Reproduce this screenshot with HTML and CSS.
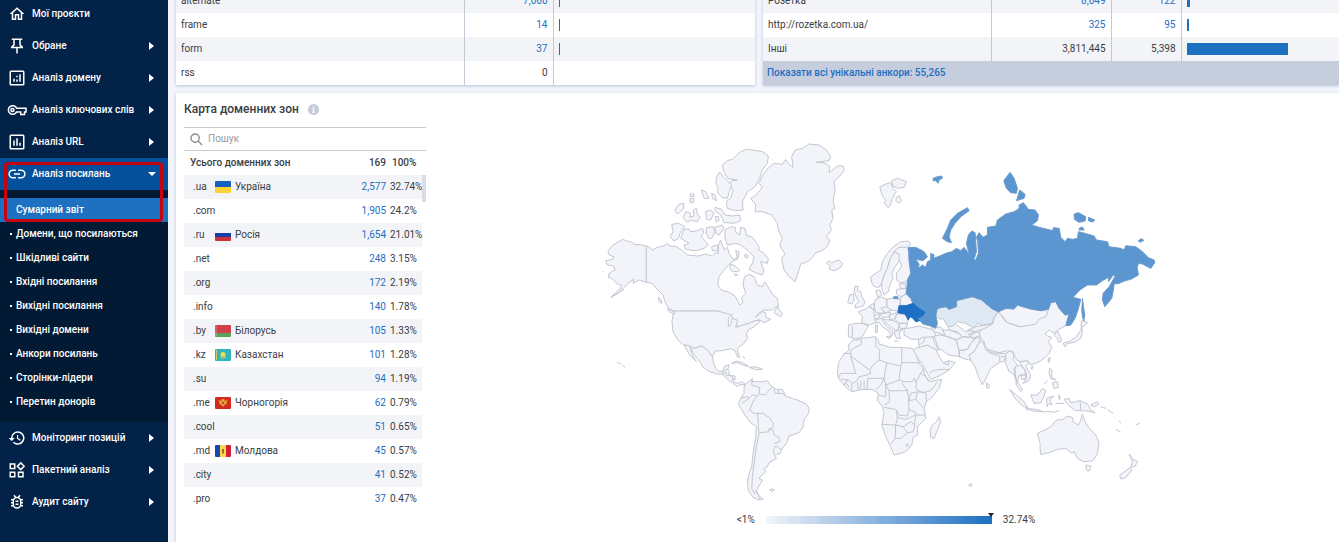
FILE: index.html
```html
<!DOCTYPE html>
<html lang="uk">
<head>
  <meta charset="UTF-8">
  <meta name="viewport" content="width=device-width, initial-scale=1.0">
  <title>Аналіз посилань - Сумарний звіт</title>
  <link rel="stylesheet" href="styles.css">
</head>
<body>
  <nav class="sidebar">
    <a class="menu-item" href="#">
      <svg class="menu-icon" viewBox="0 0 24 24"><path d="M12 5.690l5 4.500V18h-2v-6H9v6H7v-7.810l5-4.500M12 3L2 12h3v8h6v-6h2v6h6v-8h3z"/></svg>
      <span>Мої проєкти</span>
    </a>
    <a class="menu-item has-arrow" href="#">
      <svg class="menu-icon" viewBox="0 0 24 24"><path d="M5 2h14v2h-2v6l3 3v2h-7v7h-2v-7H4v-2l3-3V4H5zM9 4v7l-2 2h10l-2-2V4z"/></svg>
      <span>Обране</span>
    </a>
    <a class="menu-item has-arrow" href="#">
      <svg class="menu-icon line" viewBox="0 0 24 24"><rect x="3" y="3" width="18" height="18" rx="1"/><path d="M8 13v4M12 9v2M12 14v3M16 7v10"/></svg>
      <span>Аналіз домену</span>
    </a>
    <a class="menu-item has-arrow" href="#">
      <svg class="menu-icon line" viewBox="0 0 24 24"><path d="M11.500 9.500H24v5h-2V18h-5v-3.500h-5.500A5.800 5.800 0 1 1 11.500 9.500z"/><circle cx="6" cy="12" r="2"/></svg>
      <span>Аналіз ключових слів</span>
    </a>
    <a class="menu-item has-arrow" href="#">
      <svg class="menu-icon line" viewBox="0 0 24 24"><rect x="3" y="3" width="18" height="18" rx="1"/><path d="M8 10v7M12 7v10M16 13v4"/></svg>
      <span>Аналіз URL</span>
    </a>
    <div class="menu-group">
      <a class="menu-item has-arrow open" href="#">
        <svg class="menu-icon line" viewBox="0 0 24 24"><path d="M10.500 7H6.500a5 5 0 0 0 0 10h4M13.500 7h4a5 5 0 0 1 0 10h-4M8 12h8"/></svg>
        <span>Аналіз посилань</span>
      </a>
      <div class="submenu">
        <a class="active" href="#">Сумарний звіт</a>
        <a href="#">Домени, що посилаються</a>
        <a href="#">Шкідливі сайти</a>
        <a href="#">Вхідні посилання</a>
        <a href="#">Вихідні посилання</a>
        <a href="#">Вихідні домени</a>
        <a href="#">Анкори посилань</a>
        <a href="#">Сторінки-лідери</a>
        <a href="#">Перетин донорів</a>
      </div>
      <div class="highlight"></div>
    </div>
    <a class="menu-item has-arrow" href="#">
      <svg class="menu-icon" viewBox="0 0 24 24"><path d="M13 3a9 9 0 0 0-9 9H1l4 4 4-4H6a7 7 0 1 1 2.060 4.940l-1.420 1.420A9 9 0 1 0 13 3zm-1 5v5l4.250 2.520.77-1.280-3.520-2.090V8z"/></svg>
      <span>Моніторинг позицій</span>
    </a>
    <a class="menu-item has-arrow" href="#">
      <svg class="menu-icon line" viewBox="0 0 24 24"><path d="M3 4h6v6H3zM3 15h6v6H3zM14 15h6v6h-6zM17 2.500l4.500 4.500-4.500 4.500L12.500 7z"/></svg>
      <span>Пакетний аналіз</span>
    </a>
    <a class="menu-item has-arrow" href="#">
      <svg class="menu-icon line" viewBox="0 0 24 24"><rect x="7" y="6" width="10" height="14" rx="5"/><path d="M8 3l2.500 3M16 3l-2.500 3M4 9h3M17 9h3M4 13h3M17 13h3M4 17h3M17 17h3M10 11h4M10 15h4"/></svg>
      <span>Аудит сайту</span>
    </a>
  </nav>

  <main class="content">
    <div class="reports">
      <section class="card">
        <table class="report types">
          <tr><td>alternate</td><td><a href="#">7,060</a></td><td><div class="bar" style="width: 1px"></div></td></tr>
          <tr><td>frame</td><td><a href="#">14</a></td><td><div class="bar" style="width: 1px"></div></td></tr>
          <tr><td>form</td><td><a href="#">37</a></td><td><div class="bar" style="width: 1px"></div></td></tr>
          <tr><td>rss</td><td>0</td><td></td></tr>
        </table>
      </section>
      <section class="card">
        <table class="report anchors">
          <tr><td>Розетка</td><td><a href="#">8,649</a></td><td><a href="#">122</a></td><td><div class="bar" style="width: 3px"></div></td></tr>
          <tr><td>http://rozetka.com.ua/</td><td><a href="#">325</a></td><td><a href="#">95</a></td><td><div class="bar" style="width: 2px"></div></td></tr>
          <tr><td>Інші</td><td>3,811,445</td><td>5,398</td><td><div class="bar" style="width: 101px"></div></td></tr>
        </table>
        <a class="show-all" href="#">Показати всі унікальні анкори: 55,265</a>
      </section>
    </div>

    <section class="card zones">
      <div class="zones-list">
        <h2>Карта доменних зон
          <svg class="info" viewBox="0 0 12 12"><circle cx="6" cy="6" r="6"/><path d="M5.300 2.500h1.600V4H5.300zM4.700 5h2.200v3.500h.6v1h-3v-1h.8V6h-.6z"/></svg>
        </h2>
        <label class="search">
          <svg viewBox="0 0 14 14"><circle cx="5.500" cy="5.500" r="4.500"/><path d="M9 9l4 4"/></svg>
          <input type="text" placeholder="Пошук" aria-label="Пошук">
        </label>
        <div class="zones-scroll">
          <table class="zones-table">
            <colgroup>
              <col class="col-code">
              <col>
              <col class="col-count">
              <col class="col-share">
            </colgroup>
            <thead>
              <tr><th colspan="2">Усього доменних зон</th><th>169</th><th>100%</th></tr>
            </thead>
            <tbody>
              <tr><td>.ua</td><td><svg class="flag" viewBox="0 0 16 12"><path fill="#1561c2" d="M0 0h16v6H0z"/><path fill="#fcd535" d="M0 6h16v6H0z"/></svg>Україна</td><td><a href="#">2,577</a></td><td>32.74%</td></tr>
              <tr><td>.com</td><td></td><td><a href="#">1,905</a></td><td>24.2%</td></tr>
              <tr><td>.ru</td><td><svg class="flag" viewBox="0 0 16 12"><path fill="#f4f5f8" d="M0 0h16v4H0z"/><path fill="#173fa8" d="M0 4h16v4H0z"/><path fill="#d03038" d="M0 8h16v4H0z"/></svg>Росія</td><td><a href="#">1,654</a></td><td>21.01%</td></tr>
              <tr><td>.net</td><td></td><td><a href="#">248</a></td><td>3.15%</td></tr>
              <tr><td>.org</td><td></td><td><a href="#">172</a></td><td>2.19%</td></tr>
              <tr><td>.info</td><td></td><td><a href="#">140</a></td><td>1.78%</td></tr>
              <tr><td>.by</td><td><svg class="flag" viewBox="0 0 16 12"><path fill="#d0414b" d="M0 0h16v8H0z"/><path fill="#5ba05c" d="M0 8h16v4H0z"/><path fill="none" stroke="#eab9bb" stroke-dasharray="1 1" d="M1 0v12"/></svg>Білорусь</td><td><a href="#">105</a></td><td>1.33%</td></tr>
              <tr><td>.kz</td><td><svg class="flag" viewBox="0 0 16 12"><path fill="#2fb4c4" d="M0 0h16v12H0z"/><circle cx="8" cy="5.500" r="2.500" fill="#f2dc4e"/><path fill="none" stroke="#c9d35d" d="M5 8q3 3 6 0M1.500 1v10"/></svg>Казахстан</td><td><a href="#">101</a></td><td>1.28%</td></tr>
              <tr><td>.su</td><td></td><td><a href="#">94</a></td><td>1.19%</td></tr>
              <tr><td>.me</td><td><svg class="flag" viewBox="0 0 16 12"><path fill="#d22a20" d="M0 0h16v12H0z"/><path fill="#e2a13a" d="M3.500 3l2.500 1 1-2h2l1 2 2.500-1-1 4-2 1-1.500 2L6.500 8l-2-1z"/><circle cx="8" cy="6" r="1" fill="#b02a20"/></svg>Чорногорія</td><td><a href="#">62</a></td><td>0.79%</td></tr>
              <tr><td>.cool</td><td></td><td><a href="#">51</a></td><td>0.65%</td></tr>
              <tr><td>.md</td><td><svg class="flag" viewBox="0 0 16 12"><path fill="#1648b0" d="M0 0h6v12H0z"/><path fill="#fcd94a" d="M5 0h6v12H5z"/><path fill="#d32036" d="M11 0h5v12h-5z"/><path fill="#a5682e" d="M7 4h2v4l-1 1-1-1z"/></svg>Молдова</td><td><a href="#">45</a></td><td>0.57%</td></tr>
              <tr><td>.city</td><td></td><td><a href="#">41</a></td><td>0.52%</td></tr>
              <tr><td>.pro</td><td></td><td><a href="#">37</a></td><td>0.47%</td></tr>
            </tbody>
          </table>
          <div class="scroll-thumb"></div>
        </div>
      </div>

      <div class="map">
        <svg class="world" viewBox="588 130 592 374">
          <!-- North America, Greenland, Iceland -->
          <g transform="translate(590 130) scale(.33333)">
            <path d="M172 348L150 343 138 344 125 335 112 333 103 328 85 337 70 347 57 362 60 375 75 380 72 388 50 392 55 405 75 408 78 420 60 430 58 442 68 445 75 452 85 462 98 465 92 477 80 488 65 502 88 489 105 472 120 458 135 447 132 460 150 450 172 457z"/>
            <path d="M172 348L182 352 190 360 205 352 225 348 235 340 242 348 262 350 280 362 295 375 325 378 350 372 370 378 382 366 388 372 388 345 395 330 400 345 405 360 415 352 420 370 432 388 445 385 440 362 450 365 447 385 430 395 418 405 405 420 390 440 386 465 397 480 420 487 437 497 445 510 452 525 461 518 458 502 470 490 462 465 466 440 480 433 495 440 505 465 520 470 527 455 540 475 550 492 565 505 568 525 550 540 525 540 508 550 500 562 520 545 530 548 530 562 545 568 525 578 512 570 498 572 480 580 462 585 450 590 440 582 430 560 410 550 385 543 254 543 240 535 230 520 222 495 205 478 190 460 172 457z"/>
            <path d="M254 543H385L410 550 430 555 418 565 418 590 425 585 428 565 445 570 440 592 462 585 480 580 498 572 512 570 508 580 492 592 480 598 472 610 475 625 465 640 448 652 445 662 452 682 445 680 438 662 425 656 400 662 378 663 370 680 355 660 338 648 315 655 300 647 285 645 268 632 252 605 249 575z"/>
            <path d="M285 645L300 647 315 655 338 648 355 660 370 680 375 705 385 722 400 725 407 708 420 704 418 715 408 725 400 733 385 732 360 724 340 710 335 698 320 680 303 652 310 675 322 695 300 672z"/>
            <path d="M400 725L415 716 422 727 418 735 438 738 438 750 425 745 405 735z"/>
            <path d="M428 700L442 693 460 697 480 710 462 705 445 698zM482 712L500 710 520 718 500 719zM462 678l5 8M85 697l10 5M100 705l8 7M42 424h2M65 502l20-12 20-12"/>
            <path d="M400 105L415 92 430 88 440 78 455 65 472 58 490 60 520 65 538 78 535 100 520 118 512 145 498 170 475 185 468 200 460 215 462 240 440 242 415 235 412 215 425 205 432 180 420 165 428 152 445 150 415 145 405 125z"/>
            <path d="M383 140L392 126 402 140 412 150 428 165 422 180 415 205 398 202 385 185 388 175 380 158z"/>
            <path d="M337 180L350 185 360 205 345 205zM368 190l10 5 4 17-12-7zM303 192h12v8h-10zM303 205l12 2-3 12-10-3zM270 222L285 220 283 238 265 252 257 240zM290 245L305 250 302 262 315 258 313 240 322 235 325 252 333 262 325 275 305 270 295 278 282 262zM350 245L362 240 375 248 365 270 352 268zM378 260l10 0 2 12-8 3zM378 232L398 238 408 255 430 258 452 255 455 272 435 280 405 277 395 255 378 242z"/>
            <path d="M248 283L268 280 288 290 275 305 268 325 255 333 243 320 252 305zM285 298L300 297 305 305 322 303 340 295 345 310 335 318 350 335 358 345 345 355 320 362 290 358 285 345 300 340 275 325 280 312zM352 293L372 290 378 305 368 325 358 325 352 310zM378 292L400 285 405 295 390 315 380 310zM368 350L385 345 388 362 370 362z"/>
            <path d="M408 300L425 290 440 293 438 305 452 315 455 292 468 295 472 315 490 322 500 335 510 350 510 360 525 370 538 385 535 400 515 395 520 410 525 420 520 435 500 428 480 418 490 400 495 382 478 362 455 345 440 340 415 345 408 325z"/>
            <path d="M425 402L438 408 452 420 448 425 430 425 422 412zM468 372l10 5-3 8-8-4zM436 432l10 2-7 3zM208 503L215 507 218 520 210 515zM235 535L258 548 255 553 238 543zM555 548L567 528 570 540 580 550 575 560z"/>
            <path d="M498 245L500 225 485 205 500 195 520 172 510 160 522 135 540 112 555 100 580 103 590 88 600 103 612 112 608 80 618 60 640 55 660 42 690 45 712 60 725 80 720 92 695 95 680 97 700 98 712 102 722 110 720 128 745 108 762 108 765 122 750 140 735 155 738 180 732 215 738 235 728 240 732 265 722 285 727 300 712 320 722 330 715 350 698 362 680 368 668 385 655 395 635 402 628 425 618 455 600 440 585 420 578 385 588 372 572 345 580 325 568 300 565 280 548 255 520 245z"/>
            <path d="M712 398L722 392 728 400 735 394 750 390 760 400 755 412 735 422 720 417 724 408z"/>
          </g>
          <!-- South America and Africa -->
          <g transform="translate(720 330) scale(.33333)">
            <path d="M10 133L20 125 20 135 40 138 42 155 55 160 70 155 78 163 60 165 55 170 40 158 28 150z"/>
            <path d="M78 163L88 155 100 146 98 155 115 155 130 155 145 152 158 170 172 178 190 178 200 198 220 205 235 210 262 222 270 235 268 250 255 270 252 290 240 308 210 318 205 335 190 355 182 372 165 372 172 385 150 398 145 410 135 415 140 425 128 435 120 445 130 450 125 460 112 480 118 495 132 507 118 510 100 500 88 480 85 455 92 425 98 410 102 370 110 320 112 290 92 275 78 255 65 235 58 222 65 205 75 190 75 172z"/>
            <path class="border" d="M100 148L98 165 122 172 120 195M65 205L82 200 90 205 68 220M90 205L100 195 118 198M122 192L138 195 150 180 162 170M165 175L168 190 190 190 200 198M178 178V190M112 200L102 215 92 240 105 250 116 250 118 290M116 250L132 250 150 262 163 280 162 292 148 298 150 305 120 308M150 298L162 300 165 315 180 322 182 335 165 340M165 352L172 348 188 360M165 352L163 370M118 290L120 308 112 350 105 400 100 440 98 475 108 492M108 482L118 495 122 508"/>
            <path d="M152 480l6-4 8 4-6 4z"/>
            <path d="M400 30L415 30 430 25 470 20 478 30 480 42 490 45 515 52 545 52 580 55 592 75 600 100 612 115 618 135 632 155 655 150 668 148 660 175 640 200 622 215 615 235 620 265 595 290 595 315 582 322 578 345 560 365 525 375 515 350 500 320 488 285 495 250 490 230 475 210 478 190 460 178 440 178 420 180 398 185 385 175 370 160 358 145 355 130 358 100 372 75 390 60 388 45z"/>
            <path class="border" d="M372 70H395V78L452 120 462 105 480 90 482 60 470 48V22M425 28L428 42 395 60V70M395 78L410 130H365M365 130L358 145M452 120L455 130 435 137 420 140 410 155 400 160 388 150 365 148M445 145H495L503 98 480 90M503 98L545 108 548 98V52M548 98H605M545 108L540 150 500 165 495 145M540 150L555 155 580 155 586 145 590 157 605 130 615 115M500 165L510 182 565 182 548 158M447 145L443 178M495 145L485 165 470 180M500 165V200L478 195M435 152V178M425 152V178M415 155L418 180M398 160V182M375 160L388 150M372 165L382 160 390 172M510 182L512 215 495 225M495 232L530 238 540 255 565 258 570 240 568 200 565 182M532 240L535 262 530 285 490 283M535 262L560 268 590 255 588 245 570 240M590 255H618M570 212L590 208 612 232M590 208L595 185 620 188 622 215M592 157L590 175 610 188 635 182 655 155M605 130L620 140 630 155M570 212L575 190 595 185M530 285L528 325 515 342M530 285L552 290 565 308 545 325 528 325M552 290L575 275 588 285 582 305 565 308M590 255L586 285M560 345l5-4 5 5-5 5z"/>
            <path d="M660 260L665 275 655 300 645 325 635 323 633 300 640 285 652 275z"/>
            <path d="M583 60L600 50 625 45 650 58 662 82 672 98 690 92 708 98 690 120 660 138 635 148 625 130 608 100 592 78z"/>
            <path class="border" d="M630 130L640 122 665 118 690 118M672 98L688 105 690 92"/>
            <path d="M598 25L620 15 640 18 645 35 660 60 650 58 625 45 600 52z"/>
            <path class="border" d="M600 45L615 35 620 15"/>
          </g>
          <!-- Europe -->
          <g transform="translate(820 160) scale(.33333)">
            <path d="M182 80L200 72 215 68 222 85 232 95 225 105 218 120 214 135 208 143 196 130 200 122 190 108zM218 62L235 55 262 65 255 82 235 85 222 78zM232 112L240 107 248 122 238 130 230 122z"/>
            <path d="M155 350L185 330 190 305 205 280 225 258 245 245 268 243 275 253 262 262 240 262 225 275 212 300 205 325 195 345 188 368 180 382 165 380 158 368z"/>
            <path d="M195 345L205 325 212 300 225 275 240 282 242 300 228 320 218 340 222 355 212 375 208 395 195 405 188 385 188 368z"/>
            <path d="M225 275L240 262 262 262 272 275 270 300 275 340 262 365 245 368 232 360 232 340 248 318 240 300 240 282z"/>
            <path d="M108 378L118 380 115 392 125 395 128 410 138 425 132 438 108 444 108 435 120 425 112 412 105 395zM92 405L103 402 105 420 98 432 86 428zM170 392L182 390 188 405 175 412zM240 372L258 370 260 385 245 385zM232 388L262 385 260 402 245 410 232 402z"/>
            <path d="M245 412L262 402 275 415 282 430 260 437 243 435zM203 418L225 413 243 418 243 440 235 453 215 450 203 440zM168 420L185 410 203 418 203 440 192 445 195 460 170 458 165 438zM118 455L140 447 150 440 165 450 165 468 170 488 150 495 128 488 130 470zM150 438L165 430 167 450z"/>
            <path d="M88 495L110 490 130 490 148 497 138 515 130 530 110 537 88 530zM100 497V532M165 468L180 460 182 472 168 478zM182 462L215 456 212 470 190 473zM185 445L203 440 217 450 200 458zM210 465L232 458 230 475 212 480zM232 462L258 462 268 480 265 490 240 490 228 478zM240 490H265L262 505 242 505z"/>
            <path d="M170 478L190 475 192 485 205 500 222 515 218 530 208 512 190 500 180 487 170 488zM192 478L212 480 225 482 240 492 238 508 225 510 205 492zM225 515L252 508 240 518 245 535 232 535zM202 530l12-2-2 8zM170 495l5 0 0 22-6 0zM225 543h14"/>
            <path d="M255 505L265 505 300 498 345 510 350 530 310 532 300 538 275 537 255 525z"/>
            <path d="M335 498L365 502 385 520 375 525 345 515z"/>
          </g>
          <!-- Asia and Oceania -->
          <g transform="translate(940 310) scale(.33333)">
            <path d="M178 5L165 25 162 40 130 55 120 70 125 85 135 95 138 110 150 120 180 128 205 122 222 125 232 150 245 155 265 152 275 165 300 155 318 142 330 130 338 110 328 95 338 82 325 78 318 72 330 60 345 70 355 60 380 47 390 12 378 15 360-5 350-25 335-22 328-2 305 5 240 50 200 35z"/>
            <path d="M178 5L205-5 225-3 235-15 275-3 305 2 328-2 322 18 300 28 290 42 245 50 205 38 195 25z"/>
            <path d="M345 75L355 62 362 78 368 92 360 98 355 85zM372 100L395 92 412 80 425 60 428 45 430 65 425 85 405 97 385 100 378 110zM428 32L445 38 432 50 425 45zM328 145l5-3-2 15-4-2zM275 172l7-3-4 9z"/>
            <path d="M95 150L90 135 105 125 118 100 130 92 140 118 160 128 182 130 200 130 195 155 185 155 155 175 145 195 138 210 130 225 118 200 108 170zM142 218l8 8 0 8-7 0z"/>
            <path class="border" d="M140 118L150 128 182 138V155M185 140H197"/>
            <path d="M200 130L215 122 225 135 222 148 235 165 225 175 230 200 235 218 222 190 210 185 200 160zM228 170L245 165 258 180 258 195 240 195 235 215 250 240 245 245 232 225 228 195zM242 155L265 152 270 160 260 168 275 195 270 212 252 220 262 205 262 188 250 170zM245 195L262 195 258 208 248 208z"/>
            <path d="M60 140L60 122 85 118 95 100 110 82 125 85 118 100 105 125 90 135 95 150 80 148zM52 90L70 80 100 82 110 85 95 100 85 118 60 122 55 105zM-15 78L0 75 20 78 50 88 55 105 60 122 62 140 30 135 8 120-2 115zM10 60L30 60 60 70 70 80 52 90 20 78zM25 35L40 35 60 50 80 65 100 60 105 70 88 82 70 80 55 65 30 60zM85 60L110 50 160 42 130 58 105 65zM88 72L120 65 122 78 100 85z"/>
            <path d="M212 238L235 258 255 275 265 292 250 288 228 265zM260 293L300 300 310 305 285 303 262 298zM275 255L295 255 310 235 320 240 315 258 305 278 285 280zM322 265L345 258 332 268 338 285 328 280 324 290zM332 175L338 180 338 200 350 210 335 205 330 190zM340 218L355 215 358 232 345 235zM315 222l11-10M358 255l6 5-3 10zM350 280h25M310 305l35 0M345 308l15-7"/>
            <path d="M375 268L390 265 395 278 410 275 423 272 445 282 455 300 468 308 445 303 425 302 405 300 385 282zM423 272L425 303M455 285L475 275 480 282 465 290zM485 290l15 5M505 298l17 12M540 332l6 8M530 358l15 8M590 345l12-6"/>
            <path d="M295 370L320 358 335 350 350 332 362 328 370 330 382 318 400 322 402 335 418 345 425 330 430 312 438 335 448 352 470 375 480 400 475 430 462 452 435 455 415 445 405 425 398 430 380 415 355 418 330 428 305 433 303 415 303 400zM440 465L456 468 450 483 442 480zM570 432L582 448 596 455 588 468 575 472 580 455zM572 473L578 480 560 503 545 507 542 495z"/>
            <circle cx="94" cy="525" r="4"/>
          </g>
          <!-- Countries with a noticeable share -->
          <g transform="translate(820 160) scale(.33333)">
            <path class="kz" d="M355 445L380 440 390 448 412 440 412 422 460 410 488 420 520 445 537 455 525 470 520 490 490 495 475 490 465 505 440 490 415 485 400 500 385 498 372 475 362 478 352 465z"/>
            <path class="ru" d="M268 262L290 262 315 275 325 290 312 302 290 298 300 312 298 325 310 315 320 322 325 305 335 300 335 280 345 285 343 295 362 288 380 280 398 275 412 265 425 272 435 262 450 283 442 250 448 225 458 213 468 218 470 245 472 275 464 300 470 300 478 280 476 245 472 232 480 218 492 232 505 225 505 202 530 198 535 180 560 162 585 155 600 145 600 135 613 128 628 148 648 150 658 165 655 182 638 195 660 202 685 208 702 212 702 203 720 205 725 232 738 245 745 235 760 238 775 235 778 215 805 222 825 228 832 240 865 245 870 260 905 265 915 270 920 257 950 260 970 275 988 293 1005 300 1007 308 995 325 970 312 958 310 954 322 958 345 935 358 918 362 900 370 885 372 882 395 878 415 857 440 850 420 852 400 870 380 888 348 882 345 868 365 868 352 850 362 832 375 805 375 782 390 762 412 785 418 778 445 768 475 755 495 740 497 750 462 738 465 720 445 710 425 695 428 688 448 665 452 635 447 610 440 595 435 585 447 560 445 538 455 520 447 505 435 488 420 460 410 412 422 412 440 390 448 380 440 355 445 350 465 355 490 350 505 335 498 312 492 305 485 298 475 318 457 300 445 282 430 275 415 262 402 265 360 275 340 270 300z"/>
            <path class="ru" d="M370 235L385 205 395 180 415 160 445 143 450 152 425 170 408 190 395 210 390 230 397 248 385 245zM342 55L355 50 368 48 370 55 360 60 357 70 350 62 342 62zM554 62L573 37 585 55 595 85 592 100 575 98 562 85zM602 90L618 103 615 115 592 122zM765 162L778 158 800 170 798 183 780 187 766 178zM808 172L827 180 820 186 808 182zM780 205l10-4 5 9-15 0zM957 242l10-6 7 5-10 6zM790 415L793 440 797 465 794 483 790 470 788 450zM224 410l12 0 2 6-14 0z"/>
            <path class="ua" d="M240 437L262 437 282 430 300 445 318 457 310 468 295 475 302 482 290 485 280 473 272 470 268 480 258 462 236 458z"/>
          </g>
        </svg>
        <div class="legend">
          <span>&lt;1%</span>
          <div class="scale"></div>
          <span>32.74%</span>
        </div>
      </div>
    </section>
  </main>
</body>
</html>
```
FILE: styles.css
```css
* {
  box-sizing: border-box;
}
body {
  margin: 0;
  height: 100vh;
  display: flex;
  overflow: hidden;
  background: #f2f5fc;
  color: #3a3d42;
  font-family: Roboto, sans-serif;
  font-size: 10px;
  line-height: 24px;
}
a {
  color: #1e70c1;
  text-decoration: none;
}

/* sidebar */
.sidebar {
  flex: 0 0 168px;
  margin-top: -2px;
  background: #022247;
}
.menu-item {
  display: flex;
  align-items: center;
  gap: 6px;
  height: 32px;
  padding: 0 14px 0 8px;
  color: #fff;
  font-weight: 500;
}
.menu-icon {
  width: 18px;
  height: 18px;
  fill: #fff;
}
.menu-icon.line {
  fill: none;
  stroke: #fff;
  stroke-width: 2;
  overflow: visible;
}
.has-arrow::after {
  content: "";
  margin-left: auto;
  border: 4px solid transparent;
  border-left: 5px solid #fff;
  border-right: 0;
}
.menu-item.open {
  padding-right: 12px;
  background: #05509b;
}
.has-arrow.open::after {
  border: 4px solid transparent;
  border-top: 4px solid #fff;
  border-bottom: 0;
}
.menu-group {
  position: relative;
}
.submenu {
  padding: 8px 0;
  background: #021a33;
}
.submenu a {
  display: block;
  padding-left: 16px;
  color: #fff;
  font-weight: 500;
}
.submenu a::before {
  content: "";
  float: left;
  width: 2px;
  height: 2px;
  margin: 11px 0 0 -6px;
  background: #fff;
}
.submenu .active {
  background: #1e70c1;
}
.submenu .active::before {
  display: none;
}
.highlight {
  position: absolute;
  top: 4px;
  left: 4px;
  width: 159px;
  height: 60px;
  border: 3px solid #c5040f;
  border-radius: 4px;
}

/* content */
.content {
  flex: 1;
  min-width: 0;
  margin-top: -11px;
  padding-left: 8px;
}
.card {
  background: #fff;
  box-shadow: 0 1px 3px #b9c1d6;
}
.reports {
  display: grid;
  grid-template-columns: 579fr 576fr;
  gap: 8px;
}
.report {
  width: 100%;
  border-collapse: collapse;
  table-layout: fixed;
}
.report tr:nth-child(odd) {
  background: #f3f4f8;
}
.report td {
  height: 24px;
  padding: 0 5px;
}
.report td + td {
  border-left: 1px solid #c3c8d5;
  text-align: right;
}
.types td:nth-child(2) {
  width: 89px;
}
.types td:nth-child(3) {
  width: 202px;
}
.anchors td:nth-child(2) {
  width: 120px;
}
.anchors td:nth-child(3) {
  width: 70px;
}
.anchors td:nth-child(4) {
  width: 158px;
}
.bar {
  height: 12px;
  background: #1e70c1;
}
.show-all {
  display: block;
  padding-left: 4px;
  background: #c6cddd;
  font-weight: 500;
}

/* domain zones */
.zones {
  display: flex;
  margin-top: 8px;
  padding-left: 8px;
  min-height: 460px;
}
.zones-list {
  flex: 0 0 242px;
}
.zones h2 {
  display: flex;
  align-items: center;
  gap: 9px;
  margin: 0 0 4px;
  padding-top: 2px;
  font-size: 12px;
  font-weight: 500;
  line-height: 28px;
}
.info {
  width: 11px;
  height: 11px;
  fill: #c3cad8;
}
.info path {
  fill: #fff;
}
.search {
  display: flex;
  align-items: center;
  gap: 5px;
  height: 24px;
  padding-left: 6px;
  border: 1px solid #c6c9cf;
  border-width: 1px 0;
}
.search svg {
  width: 13px;
  height: 13px;
  fill: none;
  stroke: #8b8f96;
  stroke-width: 1.5;
}
.search input {
  flex: 1;
  min-width: 0;
  height: 20px;
  padding: 0;
  border: 0;
  outline: 0;
  background: none;
  font: inherit;
  line-height: 20px;
}
.search input::placeholder {
  color: #989ba1;
}
.zones-scroll {
  position: relative;
  padding-right: 4px;
}
.zones-table {
  width: 100%;
  border-collapse: collapse;
  table-layout: fixed;
}
.col-code {
  width: 31px;
}
.col-count {
  width: 46px;
}
.col-share {
  width: 36px;
}
.zones-table th,
.zones-table td {
  height: 24px;
  padding: 0;
  white-space: nowrap;
}
.zones-table th {
  padding-left: 6px;
  font-weight: 500;
  text-align: left;
}
.zones-table th:nth-child(2) {
  text-align: right;
}
.zones-table tbody tr:nth-child(odd) {
  background: #f3f4f8;
}
.zones-table td:nth-child(1) {
  padding-left: 9px;
}
.zones-table td:nth-child(3) {
  text-align: right;
}
.zones-table td:nth-child(4) {
  padding-left: 4px;
}
.flag {
  width: 16px;
  height: 12px;
  margin-right: 4px;
  border-radius: 1px;
  vertical-align: middle;
}
.scroll-thumb {
  position: absolute;
  top: 24px;
  right: 0;
  width: 4px;
  height: 27px;
  background: #d9dce3;
}

/* map */
.map {
  flex: 1;
  display: flex;
  flex-direction: column;
  align-items: center;
  padding: 37px 0 0 2px;
}
.world {
  width: 65%;
}
.world path,
.world circle {
  fill: #f2f4f9;
  stroke: #c3c7d2;
  stroke-width: 1;
  stroke-linejoin: round;
  vector-effect: non-scaling-stroke;
}
.world .border {
  fill: none;
}
.world .kz {
  fill: #dfe9f4;
}
.world .ru {
  fill: #5b96d0;
  stroke: #6d9bcc;
}
.world .ua {
  fill: #1c6fc2;
  stroke: #1c6fc2;
}
.legend {
  display: flex;
  align-items: center;
  gap: 11px;
  margin: 4px 0 0 5px;
}
.scale {
  position: relative;
  width: 226px;
  height: 8px;
  background: linear-gradient(to right, #f3f4f8, #1c6fc2);
}
.scale::after {
  content: "";
  position: absolute;
  top: -3px;
  right: -2px;
  border: 3px solid transparent;
  border-top: 4px solid #222;
  border-bottom: 0;
}
```
